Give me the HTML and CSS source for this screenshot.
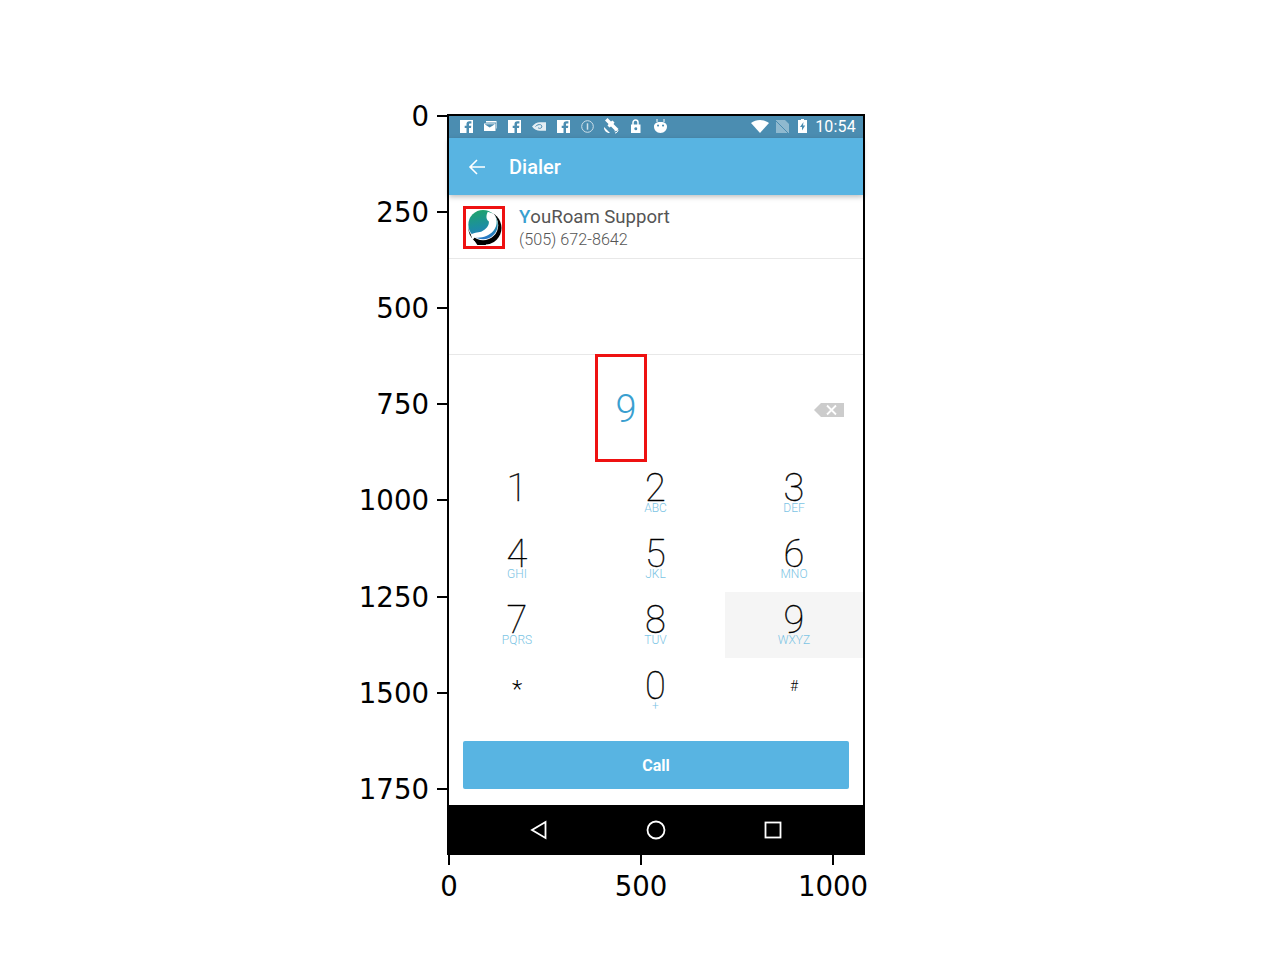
FILE: index.html
```html
<!DOCTYPE html>
<html>

<head>
    <meta charset="UTF-8">
    <title>Dialer</title>
    <link rel="stylesheet" href="styles.css">
</head>

<body>
    <div class="plot">
        <!-- axis ticks sit on the plot frame -->
        <div class="tick-y" style="top: 0px"><span>0</span></div>
        <div class="tick-y" style="top: 96px"><span>250</span></div>
        <div class="tick-y" style="top: 192px"><span>500</span></div>
        <div class="tick-y" style="top: 288px"><span>750</span></div>
        <div class="tick-y" style="top: 384px"><span>1000</span></div>
        <div class="tick-y" style="top: 481px"><span>1250</span></div>
        <div class="tick-y" style="top: 577px"><span>1500</span></div>
        <div class="tick-y" style="top: 673px"><span>1750</span></div>

        <div class="phone">
            <div class="status-bar">
                <svg class="ic" width="13" height="13" viewBox="0 0 13 13"><path fill="#fff" d="M0 0h13v13H9V8h2l.3-2.3H9V4.400c0-.7.3-1 1-1h1.400V1.200H9.300C7.400 1.200 6.500 2.400 6.500 4v1.700H4.700V8h1.800v5H0z"/></svg>
                <svg class="ic m11" width="13" height="10" viewBox="0 0 13 10"><path fill="#fff" d="M2 0h10.500v7.500H12V1.500H2zM0 2.500h11.500V10H0zM1 3.500l4.700 3 4.800-3v-.3H1z"/></svg>
                <svg class="ic m11" width="13" height="13" viewBox="0 0 13 13"><path fill="#fff" d="M0 0h13v13H9V8h2l.3-2.300H9V4.400c0-.7.3-1 1-1h1.400V1.200H9.300C7.400 1.200 6.500 2.400 6.500 4v1.700H4.700V8h1.800v5H0z"/></svg>
                <svg class="ic m10" width="16" height="11" viewBox="0 0 16 11"><path fill="#e4eef4" d="M1 5.500C3.500 2 7 .8 10 1.200h5v8.600h-5C7 10.200 3.500 9 1 5.500z"/><path fill="none" stroke="#4b8db1" d="M4.500 5.500C6 3.800 8 3.300 9.500 3.700c1.500.5 1.800 2.200.7 3.200-1 .8-2.500.6-3.200-.4"/></svg>
                <svg class="ic m10" width="13" height="13" viewBox="0 0 13 13"><path fill="#fff" d="M0 0h13v13H9V8h2l.3-2.300H9V4.400c0-.7.3-1 1-1h1.400V1.200H9.300C7.400 1.200 6.500 2.400 6.500 4v1.700H4.700V8h1.800v5H0z"/></svg>
                <svg class="ic m11" width="13" height="13" viewBox="0 0 13 13"><circle cx="6.500" cy="6.500" r="5.800" fill="none" stroke="#cfe0ea"/><path stroke="#cfe0ea" stroke-width="1.500" d="M6.500 3.300v6.400"/></svg>
                <svg class="ic m9" width="18" height="16" viewBox="0 0 18 16"><path fill="#fff" d="M2 2.500L4.500 0l3.500 3.500 1.500-1 2 2-1 1.500 3 3 2 2-2.500 2.500-2-2-3-3-1.500 1-2-2 1-1.500z"/><path fill="#fff" d="M1 9l6 6c-3 .5-6.500-2.500-6-6z"/><path fill="none" stroke="#fff" d="M12 15c1.500 0 3-1.300 3-3M11.500 13c.8 0 1.500-.7 1.500-1.500"/></svg>
                <svg class="ic m9" width="11" height="14" viewBox="0 0 11 14"><path fill="none" stroke="#fff" stroke-width="1.500" d="M3 6V3.500a2.500 2.500 0 0 1 5 0V6"/><path fill="#fff" fill-rule="evenodd" d="M1 5.500h9.500V14H1zM5.700 8.300a1.500 1.500 0 1 0 .1 3 1.500 1.500 0 0 0-.1-3z"/></svg>
                <svg class="ic m13" width="13" height="14" viewBox="0 0 13 14"><path fill="#fff" fill-rule="evenodd" d="M0 7.500C0 5 2 3 6.500 3S13 5 13 7.500c0 3.500-2.500 6.500-6.500 6.500S0 11 0 7.500zM4 5.500a1 1 0 1 0 .1 0zM9 5.500a1 1 0 1 0 .1 0z"/><path stroke="#fff" d="M3 0v3M10 0v3"/></svg>

                <svg class="ic push" width="18" height="13" viewBox="0 0 18 13"><path fill="#fff" d="M0 3C5-1 13-1 18 3L9 13z"/></svg>
                <svg class="ic m7" width="13" height="13" viewBox="0 0 13 13"><path fill="#8fb9cf" d="M0 0h9l4 4v9H0z"/><path stroke="#4b8db1" d="M0 1l12 12"/></svg>
                <svg class="ic m9" width="9" height="14" viewBox="0 0 9 14"><path fill="#fff" fill-rule="evenodd" d="M3 0h3v1h3v13H0V1h3zM5.500 3L2 8h2v3.500L7.200 6.500H5z"/></svg>
                <span class="clock">10:54</span>
            </div>

            <div class="app-bar">
                <svg class="back" width="18" height="18" viewBox="0 0 18 18"><path fill="none" stroke="#fff" stroke-width="1.600" d="M17 9H2M9 2L2 9l7 7"/></svg>
                <span class="app-title">Dialer</span>
            </div>

            <div class="contact">
                <div class="avatar">
                    <svg class="logo" viewBox="0 0 38 39">
                        <defs>
                            <linearGradient id="ball" x1="0.300" y1="0" x2="0.500" y2="1">
                                <stop offset="0" stop-color="#1fa36b" />
                                <stop offset="0.550" stop-color="#1c8fa0" />
                                <stop offset="1" stop-color="#2a78c8" />
                            </linearGradient>
                        </defs>
                        <circle cx="20" cy="20" r="17.500" fill="#000" />
                        <path fill="#000" d="M6 29l6 9h9v-4z" />
                        <circle cx="18" cy="17" r="16" fill="#fff" />
                        <circle cx="18" cy="16.500" r="15.500" fill="url(#ball)" />
                        <path fill="#fff" d="M23 3l6 2c4 4 5 12 0 18-5 6-13 8-20 7l-2 3-2-6c3-2 7-2 11-3 5-2 9-7 8-11-3-2-3-6-1-10z" />
                    </svg>
                </div>
                <div class="contact-text">
                    <div class="contact-name"><span class="initial">Y</span>ouRoam Support</div>
                    <div class="contact-number">(505) 672-8642</div>
                </div>
            </div>

            <div class="gap-row"></div>

            <div class="entry">
                <div class="entered">9</div>
                <svg class="backspace" width="30" height="14" viewBox="0 0 30 14"><path fill="#ccc" d="M7 0h23v14H7L0 7z"/><path stroke="#fff" stroke-width="1.800" d="M13 2.500l9 9M22 2.500l-9 9"/></svg>
            </div>

            <div class="keypad">
                <div class="key"><div class="num">1</div></div>
                <div class="key"><div class="num">2</div><div class="sub">ABC</div></div>
                <div class="key"><div class="num">3</div><div class="sub">DEF</div></div>
                <div class="key"><div class="num">4</div><div class="sub">GHI</div></div>
                <div class="key"><div class="num">5</div><div class="sub">JKL</div></div>
                <div class="key"><div class="num">6</div><div class="sub">MNO</div></div>
                <div class="key"><div class="num">7</div><div class="sub">PQRS</div></div>
                <div class="key"><div class="num">8</div><div class="sub">TUV</div></div>
                <div class="key key-active"><div class="num">9</div><div class="sub">WXYZ</div></div>
                <div class="key"><div class="num star">*</div></div>
                <div class="key"><div class="num">0</div><div class="sub">+</div></div>
                <div class="key"><div class="num hash">#</div></div>
            </div>

            <div class="call-wrap">
                <button class="call">Call</button>
            </div>

            <div class="nav-bar">
                <svg width="18" height="20" viewBox="0 0 18 20"><path fill="none" stroke="#fff" stroke-width="1.800" d="M15.500 2L2 10l13.500 8z"/></svg>
                <svg width="20" height="20" viewBox="0 0 20 20"><circle cx="10" cy="10" r="8.500" fill="none" stroke="#fff" stroke-width="1.800"/></svg>
                <svg width="18" height="18" viewBox="0 0 18 18"><rect x="1.500" y="1.500" width="15" height="15" fill="none" stroke="#fff" stroke-width="1.800"/></svg>
            </div>
        </div>

        <div class="x-axis">
            <div class="tick-x" style="left: 0px"><span>0</span></div>
            <div class="tick-x" style="left: 192px"><span>500</span></div>
            <div class="tick-x" style="left: 384px"><span>1000</span></div>
        </div>
    </div>
</body>

</html>
```

FILE: styles.css
```css
/* Page holds one plot figure */
body {
    margin: 0;
    box-sizing: border-box;
    height: 960px;
    padding: 114px 0 0 447px;
    background-color: white;
    font-family: Roboto, sans-serif;
}

.plot {
    position: relative;
    width: 418px;
    height: 741px;
    box-sizing: border-box;
    border: 2px solid black;
    border-bottom: none;
}

/* Axis ticks */
.tick-y {
    position: absolute;
    left: -12px;
    width: 10px;
    height: 2px;
    background-color: black;
    margin-top: -1px;
}

.tick-y span,
.tick-x span {
    position: absolute;
    font-family: "DejaVu Sans", sans-serif;
    font-size: 27.6px;
    line-height: 28px;
    color: black;
}

.tick-y span {
    right: 18px;
    top: -12px;
}

.x-axis {
    position: relative;
    height: 40px;
}

.tick-x {
    position: absolute;
    top: 0;
    margin-left: -1px;
    width: 2px;
    height: 10px;
    background-color: black;
}

.tick-x span {
    top: 18px;
    left: 1px;
    transform: translateX(-50%);
}

/* Phone screenshot */
.phone {
    display: flex;
    flex-direction: column;
    height: 739px;
    background-color: white;
}

.status-bar {
    display: flex;
    align-items: center;
    box-sizing: border-box;
    height: 22px;
    padding: 0 7px 2px 11px;
    background-color: #4b8db1;
}

.ic {
    flex: none;
}

.m7 {
    margin-left: 7px;
}

.m9 {
    margin-left: 9px;
}

.m10 {
    margin-left: 10px;
}

.m11 {
    margin-left: 11px;
}

.m13 {
    margin-left: 13px;
}

.push {
    margin-left: auto;
}

.clock {
    margin-left: 8px;
    color: white;
    font-size: 16px;
    letter-spacing: 0.2px;
}

.app-bar {
    display: flex;
    align-items: center;
    height: 57px;
    padding-left: 19px;
    background-color: #58b4e2;
    box-shadow: 0 2px 5px rgba(0, 0, 0, 0.25);
    position: relative;
}

.back {
    flex: none;
}

.app-title {
    margin-left: 23px;
    color: white;
    font-size: 20px;
    font-weight: 500;
}

.contact {
    display: flex;
    align-items: flex-start;
    height: 63px;
    border-bottom: 1px solid #e8e8e8;
}

.avatar {
    margin: 11px 0 0 14px;
    width: 36px;
    height: 37px;
    border: 3px solid #ee1111;
    flex: none;
}

.logo {
    display: block;
    width: 36px;
    height: 37px;
}

.contact-text {
    margin: 11px 0 0 14px;
}

.contact-name {
    font-size: 18.600px;
    line-height: 22px;
    color: #555555;
}

.initial {
    color: #3a9fd0;
    font-weight: 500;
}

.contact-number {
    margin-top: 1px;
    font-size: 16.200px;
    font-weight: 300;
    line-height: 22px;
    color: #555555;
}

.gap-row {
    height: 95px;
    border-bottom: 1px solid #e8e8e8;
}

.entry {
    display: flex;
    align-items: flex-start;
    height: 105px;
    padding-right: 19px;
}

.entered {
    display: flex;
    align-items: center;
    justify-content: center;
    box-sizing: border-box;
    width: 52px;
    height: 108px;
    margin: -1px 0 0 146px;
    padding: 2px 0 0 10px;
    border: 3px solid #ee1111;
    color: #3a9fd0;
    font-size: 38px;
    font-weight: 300;
    position: relative;
}

.backspace {
    margin: 48px 0 0 auto;
}

.keypad {
    display: grid;
    grid-template-columns: 138px 139px 138px;
    grid-auto-rows: 66px;
    margin-left: -1px;
}

.key {
    display: flex;
    flex-direction: column;
    align-items: center;
    padding-top: 11px;
    box-sizing: border-box;
}

.key-active {
    background-color: #f5f5f5;
}

.num {
    height: 32px;
    color: black;
    font-size: 38px;
    font-weight: 100;
    line-height: 34px;
    -webkit-text-stroke: 0.35px black;
}

.star {
    font-size: 24px;
    font-weight: 300;
    line-height: 40px;
    -webkit-text-stroke: 0;
}

.hash {
    font-size: 14px;
    font-weight: 300;
    line-height: 34px;
    -webkit-text-stroke: 0;
}

.sub {
    color: #7cc4e4;
    font-size: 12px;
    font-weight: 300;
    line-height: 10px;
}

.call-wrap {
    padding: 17px 14px 16px;
}

.call {
    display: block;
    width: 100%;
    height: 48px;
    border: none;
    border-radius: 2px;
    background-color: #58b4e2;
    color: white;
    font-family: Roboto, sans-serif;
    font-size: 16px;
    font-weight: 700;
}

.nav-bar {
    display: flex;
    align-items: center;
    justify-content: space-between;
    height: 50px;
    margin: 0 -2px;
    padding: 0 83px;
    background-color: black;
}
```
